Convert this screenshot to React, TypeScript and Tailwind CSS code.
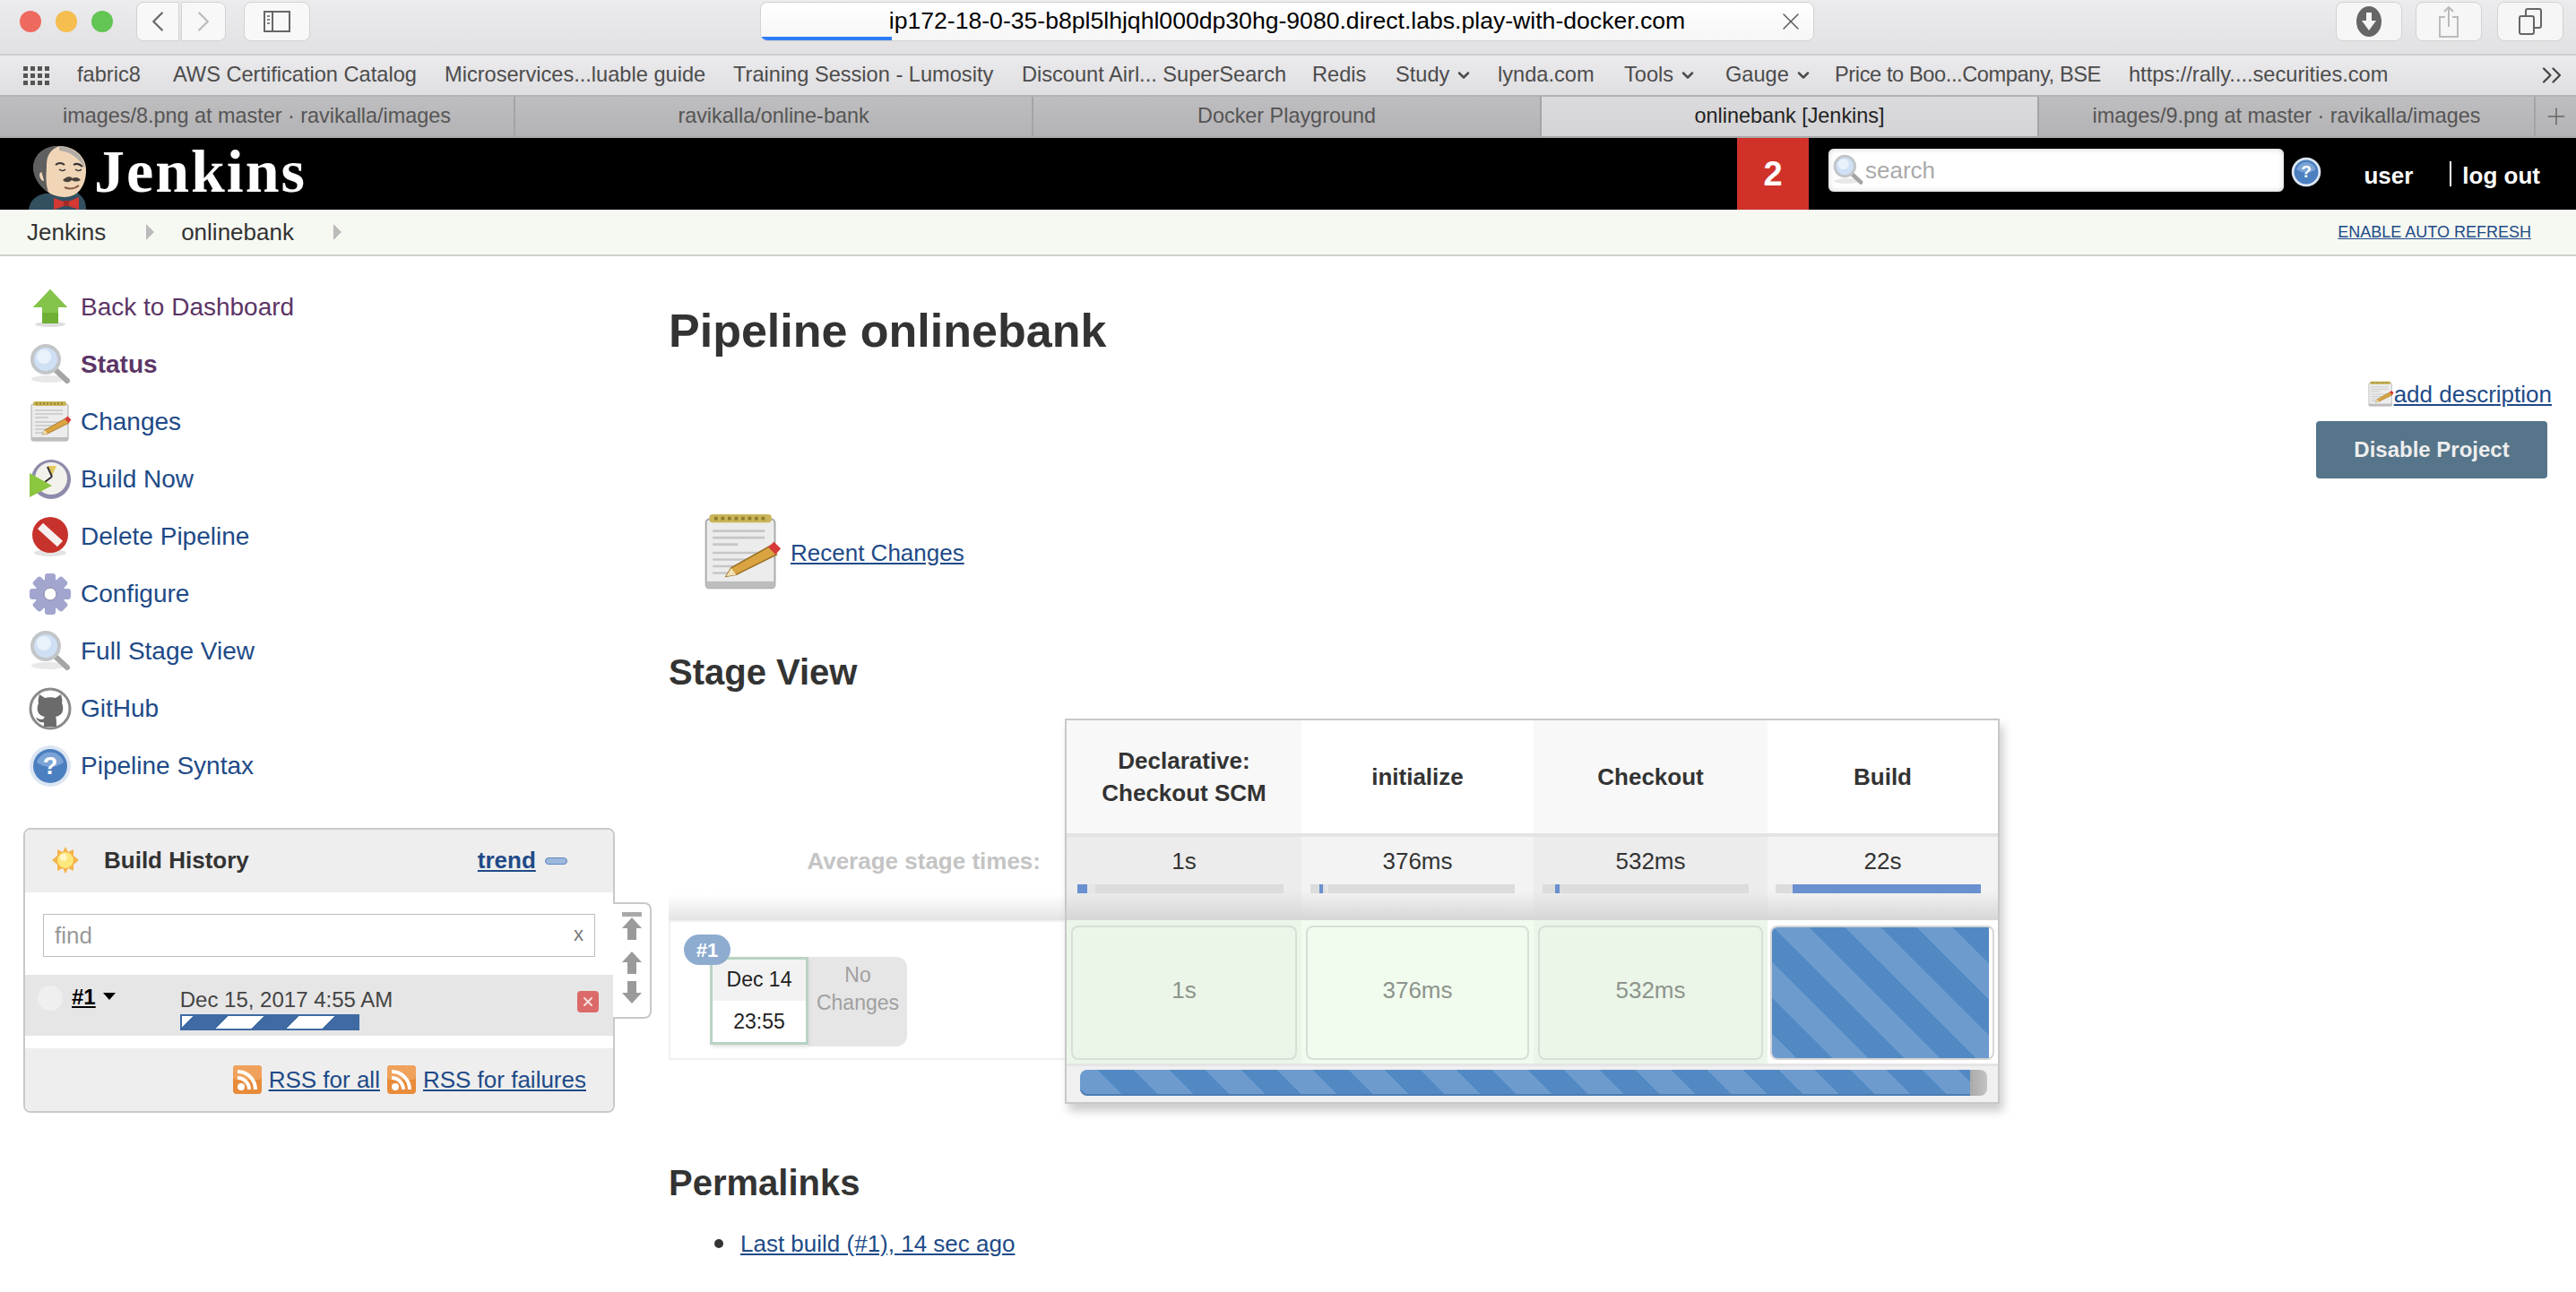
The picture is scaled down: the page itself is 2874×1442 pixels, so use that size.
import React from 'react';
import { ChevronDown, ChevronLeft, ChevronRight, ChevronsRight, Plus, X } from 'lucide-react';

const bookmarks = [
  { name: 'fabric8', w: 'w-[107px]' },
  { name: 'AWS Certification Catalog', w: 'w-[303px]' },
  { name: 'Microservices...luable guide', w: 'w-[322px]' },
  { name: 'Training Session - Lumosity', w: 'w-[322px]' },
  { name: 'Discount Airl... SuperSearch', w: 'w-[324px]' },
  { name: 'Redis', w: 'w-[93px]' },
  { name: 'Study', w: 'w-[114px]', menu: true },
  { name: 'lynda.com', w: 'w-[141px]' },
  { name: 'Tools', w: 'w-[113px]', menu: true },
  { name: 'Gauge', w: 'w-[122px]', menu: true },
  { name: 'Price to Boo...Company, BSE', w: 'w-[328px] tracking-[-0.4px]' },
  { name: 'https://rally....securities.com', w: 'w-[458px]' },
];

const tabs = [
  { name: 'images/8.png at master · ravikalla/images', w: 'w-[575px]' },
  { name: 'ravikalla/online-bank', w: 'w-[578px]' },
  { name: 'Docker Playground', w: 'w-[567px]' },
  { name: 'onlinebank [Jenkins]', w: 'w-[555px]', active: true },
  { name: 'images/9.png at master · ravikalla/images', w: 'w-[554px]' },
];

const stages = [
  {
    name: ['Declarative:', 'Checkout SCM'],
    time: '1s',
    head: 'bg-[#f8f8f8]',
    avg: 'from-[#ececec]',
    body: 'bg-[#ebf6e8] px-[5px]',
    cell: 'bg-[#ebf6e8]',
    bar: 'ml-[12px] w-[230px]',
    fill: 'ml-0 w-[11px] shadow-[9px_0_0_#e6e6e6]',
  },
  {
    name: ['initialize'],
    time: '376ms',
    head: 'bg-white',
    avg: 'from-[#f3f3f3]',
    body: 'bg-[#f1fcee] px-[5px]',
    cell: 'bg-[#f1fcee]',
    bar: 'ml-[10px] w-[228px]',
    fill: 'ml-[10px] w-[4px] shadow-[6px_0_0_#e6e6e6]',
  },
  {
    name: ['Checkout'],
    time: '532ms',
    head: 'bg-[#f8f8f8]',
    avg: 'from-[#ececec]',
    body: 'bg-[#ebf6e8] px-[5px]',
    cell: 'bg-[#ebf6e8]',
    bar: 'ml-[10px] w-[230px]',
    fill: 'ml-[14px] w-[5px]',
  },
  {
    name: ['Build'],
    time: '22s',
    head: 'bg-white',
    avg: 'from-[#f3f3f3]',
    body: 'bg-white pl-[3px] pr-[4px]',
    cell: '',
    bar: 'ml-[9px] w-[229px]',
    fill: 'ml-[19px] w-[210px]',
    running: true,
  },
];

const ArrowIcon = () => (
  <svg width="48" height="48" viewBox="0 0 48 48">
    <ellipse cx="24" cy="43" rx="17" ry="3" fill="#ddd" />
    <path d="M24 4 L43 24 H33 V42 H15 V24 H5 Z" fill="#6fb034" />
    <path d="M24 4 L43 24 H33 V30 H15 V24 H5 Z" fill="#84c44a" />
  </svg>
);

const SearchIcon = ({ size = 48 }: { size?: number }) => (
  <svg width={size} height={size} viewBox="0 0 48 48">
    <ellipse cx="22" cy="40" rx="19" ry="4" fill="#e8e8e8" />
    <path d="M29 29 L43 42" stroke="#a5a5a5" strokeWidth="6" strokeLinecap="round" />
    <circle cx="19" cy="18" r="15" fill="#cfe0f5" stroke="#c3c6c9" strokeWidth="4" />
    <circle cx="17" cy="15" r="8" fill="#e9f1fb" />
  </svg>
);

const NotepadIcon = ({ size = 48 }: { size?: number }) => (
  <svg width={size} height={size} viewBox="0 0 48 48">
    <rect x="3" y="4" width="41" height="41" rx="2" fill="#ececec" stroke="#a8a8a8" strokeWidth="1" />
    <rect x="3" y="41" width="41" height="4" fill="#bdbdbd" />
    <rect x="5" y="1" width="37" height="5" rx="2" fill="#c9b458" />
    <path d="M8 3.5 H39" stroke="#8f7d2c" strokeWidth="2" strokeDasharray="2 2" />
    <path d="M7 11 H38 M7 15 H38 M7 19 H22 M7 24 H38 M7 28 H30 M7 32 H26 M7 36 H22" stroke="#c6c6c6" strokeWidth="1.4" />
    <path d="M15 38 L18 33 L41 20 L45 25 L21 37 Z" fill="#d9a441" stroke="#9a6f22" strokeWidth="0.8" />
    <path d="M15 38 L18 33 L21 37 Z" fill="#f2e0b5" />
    <path d="M40 20.5 L43.5 17.5 L47.5 21.5 L44.5 25 Z" fill="#d83a3a" />
  </svg>
);

const BuildNowIcon = () => (
  <svg width="48" height="48" viewBox="0 0 48 48">
    <circle cx="25" cy="24" r="22" fill="#8d8bab" />
    <circle cx="25" cy="23" r="18" fill="#f3f1ec" />
    <path d="M21 9 H31 L26 20 Z" fill="#e2c75f" />
    <path d="M26 21 L21 10 M26 21 L18 27" stroke="#333" strokeWidth="2" />
    <path d="M1 17 L26 31 L1 44 Z" fill="#8bc63f" />
  </svg>
);

const DeleteIcon = () => (
  <svg width="48" height="48" viewBox="0 0 48 48">
    <ellipse cx="24" cy="42" rx="18" ry="4" fill="#e3e3e3" />
    <circle cx="24" cy="22" r="20" fill="#c8322c" />
    <path d="M13 12 L35 32" stroke="#f7eeee" strokeWidth="9" />
  </svg>
);

const GearIcon = () => (
  <svg width="48" height="48" viewBox="0 0 48 48">
    <g fill="#a2a6cf">
      <rect x="18" y="1" width="12" height="46" rx="3" />
      <rect x="18" y="1" width="12" height="46" rx="3" transform="rotate(45 24 24)" />
      <rect x="18" y="1" width="12" height="46" rx="3" transform="rotate(90 24 24)" />
      <rect x="18" y="1" width="12" height="46" rx="3" transform="rotate(135 24 24)" />
      <circle cx="24" cy="24" r="17" />
    </g>
    <circle cx="24" cy="24" r="7" fill="#fff" stroke="#83869f" strokeWidth="1" />
  </svg>
);

const GithubIcon = () => (
  <svg width="48" height="48" viewBox="0 0 48 48">
    <circle cx="24" cy="24" r="22" fill="#fff" stroke="#8a8a8a" strokeWidth="3" />
    <path
      d="M12 8 L18 12 C21 11 27 11 30 12 L36 8 C37 12 38 15 37 18 C40 24 38 32 30 33 C31 35 31 37 31 44 H17 V39 C13 40 10 38 8 34 C11 35 14 37 17 35 C17 34 17 34 18 33 C10 32 8 24 11 18 C10 15 11 12 12 8 Z"
      fill="#6b6b6b"
    />
  </svg>
);

const HelpIcon = ({ size = 48 }: { size?: number }) => (
  <svg width={size} height={size} viewBox="0 0 48 48">
    <circle cx="24" cy="24" r="23" fill="#dce6f3" />
    <circle cx="24" cy="24" r="19" fill="#4b7fbf" />
    <path d="M9 20 A15.5 15.5 0 0 1 39 20 Q24 30 9 20 Z" fill="#7ba3d6" />
    <text x="24" y="33" textAnchor="middle" fontSize="27" fontWeight="700" fill="#fff" fontFamily="Liberation Sans, sans-serif">?</text>
  </svg>
);

const RssIcon = () => (
  <svg width="32" height="32" viewBox="0 0 32 32">
    <rect width="32" height="32" rx="4" fill="#e88b3a" />
    <rect width="32" height="16" rx="4" fill="#f0a25c" />
    <circle cx="9" cy="24" r="4" fill="#fff" />
    <path d="M5 14 A13 13 0 0 1 18 27 M5 7 A20 20 0 0 1 25 27" fill="none" stroke="#fff" strokeWidth="4" />
  </svg>
);

const SunIcon = () => (
  <svg width="30" height="30" viewBox="0 0 30 30">
    <path
      d="M15 0 L18 6 L24 3 L24 10 L30 15 L24 20 L24 27 L18 24 L15 30 L12 24 L6 27 L6 20 L0 15 L6 10 L6 3 L12 6 Z"
      fill="#f5b24a"
    />
    <circle cx="15" cy="15" r="9" fill="#fbe77b" />
    <circle cx="13" cy="12" r="4" fill="#fff6c4" />
  </svg>
);

const JenkinsLogo = () => (
  <svg width="72" height="72" viewBox="0 0 72 72" className="block">
    <path d="M2 72 C3 62 10 56 20 54 L54 52 C62 56 66 62 66 72 Z" fill="#335061" />
    <path d="M8 26 C7 10 20 1 36 1 C52 1 66 12 66 28 C66 44 58 58 42 58 C24 58 10 44 8 26 Z" fill="#f0d6b7" />
    <path d="M8 32 C3 14 18 0 36 1 C26 5 22 12 22 22 C22 30 20 42 24 52 C16 48 10 40 8 32 Z" fill="#5f5f5f" />
    <path d="M36 1 C50 2 63 10 65 26 C58 14 48 7 36 6 Z" fill="#b0aca6" />
    <path d="M17 30 C12 28 12 40 20 41 Z" fill="#f0d6b7" stroke="#555" strokeWidth="1" />
    <path d="M32 22 Q37 18 42 22 M52 22 Q57 19 62 24" stroke="#333" strokeWidth="2" fill="none" />
    <path d="M36 27 Q40 30 43 27 M54 27 Q58 30 61 27" stroke="#333" strokeWidth="1.5" fill="none" />
    <path d="M40 39 C44 35 48 34 51 37 C54 35 58 36 60 39 C56 41 53 41 50 39 C47 42 43 42 40 39 Z" fill="#49433c" />
    <path d="M42 47 Q50 51 58 45" stroke="#8a5a44" strokeWidth="2" fill="none" />
    <path d="M30 59 L44 64 L58 58 L58 72 L44 67 L30 72 Z" fill="#d33833" />
    <rect x="41" y="62" width="6" height="6" rx="1" fill="#a32a26" />
  </svg>
);

const Arrow = ({ dir, bar }: { dir: 'up' | 'down'; bar?: boolean }) => (
  <svg width="24" height="32" viewBox="0 0 24 32" className={dir === 'down' ? 'rotate-180' : ''}>
    {bar && <rect x="1" y="0" width="22" height="5" fill="#a9a9a9" />}
    <path d="M12 6 L23 18 H17 V31 H7 V18 H1 Z" fill="#9a9a9a" />
  </svg>
);

const TitleBar = () => (
  <div className="flex h-[62px] items-start border-b-2 border-[#cfcecf] bg-linear-to-b from-[#ecebed] to-[#e1e0e2] pt-[2px]">
    <div className="ml-[22px] mt-[10px] flex w-[130px] gap-[16px]">
      <span className="h-[24px] w-[24px] rounded-full bg-[#ee6a5f]" />
      <span className="h-[24px] w-[24px] rounded-full bg-[#f6bd4f]" />
      <span className="h-[24px] w-[24px] rounded-full bg-[#62c554]" />
    </div>
    <button className="flex h-[44px] w-[48px] items-center justify-center rounded-l-lg border border-[#d2d2d2] bg-[#f8f8f8] text-[#6a6a6a]">
      <ChevronLeft size={38} strokeWidth={1.5} />
    </button>
    <button className="ml-[2px] flex h-[44px] w-[50px] items-center justify-center rounded-r-lg border border-[#d2d2d2] bg-[#f8f8f8] text-[#bcbcbc]">
      <ChevronRight size={38} strokeWidth={1.5} />
    </button>
    <button className="ml-[20px] flex h-[44px] w-[74px] items-center justify-center rounded-lg border border-[#d2d2d2] bg-[#f8f8f8]">
      <svg width="30" height="24" viewBox="0 0 30 24">
        <rect x="1" y="1" width="28" height="22" fill="none" stroke="#666" strokeWidth="2" />
        <path d="M10 1 V23" stroke="#666" strokeWidth="2" />
        <path d="M4 6 H7 M4 10 H7 M4 14 H7" stroke="#888" strokeWidth="2" />
      </svg>
    </button>
    <div className="relative ml-[502px] flex h-[44px] w-[1176px] items-center justify-center overflow-hidden rounded-lg border border-[#d2d2d2] bg-linear-to-b from-white to-[#f6f6f6] text-[26.6px] text-black">
      ip172-18-0-35-b8pl5lhjqhl000dp30hg-9080.direct.labs.play-with-docker.com
      <span className="absolute bottom-0 left-0 h-[4px] w-[146px] bg-[#2f7df6]" />
      <X size={32} strokeWidth={1} className="absolute right-[9px] top-[5px] text-[#555]" />
    </div>
    <button className="ml-[582px] flex h-[44px] w-[74px] items-center justify-center rounded-lg border border-[#d2d2d2] bg-[#f6f6f6]">
      <svg width="28" height="34" viewBox="0 0 28 34">
        <ellipse cx="14" cy="17" rx="14" ry="17" fill="#666" />
        <path d="M11 7 H17 V16 H22 L14 27 L6 16 H11 Z" fill="#f6f6f6" />
      </svg>
    </button>
    <button className="ml-[15px] flex h-[44px] w-[74px] items-center justify-center rounded-lg border border-[#d2d2d2] bg-[#f6f6f6]">
      <svg width="24" height="36" viewBox="0 0 24 36" fill="none" stroke="#bbb" strokeWidth="2">
        <path d="M8 13 H2 V35 H22 V13 H16 M12 24 V2 M7 7 L12 2 L17 7" />
      </svg>
    </button>
    <button className="ml-[17px] flex h-[44px] w-[74px] items-center justify-center rounded-lg border border-[#d2d2d2] bg-[#f6f6f6]">
      <svg width="26" height="30" viewBox="0 0 26 30" fill="none" stroke="#666" strokeWidth="2">
        <rect x="1" y="9" width="16" height="20" rx="2" />
        <path d="M8 9 V3 Q8 1 10 1 H23 Q25 1 25 3 V20 Q25 22 23 22 H17" />
      </svg>
    </button>
  </div>
);

const BookmarksBar = () => (
  <div className="flex h-[46px] items-center border-b-2 border-[#b3b2b4] bg-linear-to-b from-[#ebeaec] to-[#dfdee0] text-[23.6px] text-[#4c4c4c]">
    <div className="ml-[26px] mr-[31px] grid w-[29px] grid-cols-4 gap-[3px]">
      {Array.from({ length: 12 }).map((_, i) => (
        <span key={i} className="h-[5px] w-[5px] bg-[#555]" />
      ))}
    </div>
    {bookmarks.map((b) => (
      <span key={b.name} className={`flex shrink-0 items-center gap-[6px] whitespace-nowrap ${b.w}`}>
        {b.name}
        {b.menu && <ChevronDown size={20} strokeWidth={3} />}
      </span>
    ))}
    <ChevronsRight size={36} strokeWidth={1.5} className="ml-[-4px] text-[#444]" />
  </div>
);

const TabsBar = () => (
  <div className="flex h-[46px] border-b-2 border-[#a9a8aa] text-[23.4px]">
    {tabs.map((t) => (
      <div
        key={t.name}
        className={`flex shrink-0 items-center justify-center border-r-2 border-[#a4a3a5] ${t.w} ${
          t.active ? 'bg-linear-to-b from-[#dbdadc] to-[#d4d3d5] text-[#222]' : 'bg-linear-to-b from-[#bebdbf] to-[#b3b2b4] text-[#555]'
        }`}
      >
        {t.name}
      </div>
    ))}
    <div className="flex flex-1 items-center justify-center bg-linear-to-b from-[#bebdbf] to-[#b3b2b4] text-[#666]">
      <Plus size={30} strokeWidth={1.2} />
    </div>
  </div>
);

const JenkinsHeader = () => (
  <div className="flex h-[80px] items-stretch bg-black">
    <div className="ml-[30px] mt-[8px] w-[72px]">
      <JenkinsLogo />
    </div>
    <div className="ml-[3px] mt-[-3px] flex-1 font-['Liberation_Serif',serif] text-[68px] font-bold leading-[80px] tracking-[2px] text-white">Jenkins</div>
    <div className="flex w-[936px] shrink-0 whitespace-nowrap">
      <div className="flex w-[80px] items-center justify-center bg-[#d0322a] text-[38px] font-bold text-white">2</div>
      <div className="ml-[22px] mt-[12px] flex h-[48px] w-[508px] items-center rounded-md bg-white pl-[4px] text-[26px] text-[#aaa] shadow-[inset_0_0_6px_#ccc]">
        <SearchIcon size={36} />
        <span className="ml-[1px]">search</span>
      </div>
      <div className="ml-[8px] mt-[21px]">
        <HelpIcon size={34} />
      </div>
      <div className="ml-auto mt-[27px] text-[26px] font-bold leading-[30px] text-white">user</div>
      <div className="ml-[41px] mt-[26px] h-[28px] w-[2px] bg-white" />
      <div className="ml-[12px] mt-[27px] pr-[40px] text-[26px] font-bold leading-[30px] text-white">log out</div>
    </div>
  </div>
);

const Breadcrumb = () => (
  <div className="flex h-[52px] items-center border-b-2 border-[#cdd1c8] bg-[#f6f8f2] pl-[30px] text-[26px] text-[#333]">
    <span>Jenkins</span>
    <span className="ml-[45px] mr-[30px] h-0 w-0 border-y-[9px] border-l-[9px] border-y-transparent border-l-[#bbb]" />
    <span>onlinebank</span>
    <span className="ml-[44px] h-0 w-0 border-y-[9px] border-l-[9px] border-y-transparent border-l-[#bbb]" />
    <a className="ml-auto mr-[50px] text-[18px] text-[#204a87] underline">ENABLE AUTO REFRESH</a>
  </div>
);

const navItems = [
  { label: 'Back to Dashboard', icon: <ArrowIcon />, cls: 'text-[#5c3566]' },
  { label: 'Status', icon: <SearchIcon />, cls: 'text-[#5c3566] font-bold' },
  { label: 'Changes', icon: <NotepadIcon />, cls: 'text-[#204a87]' },
  { label: 'Build Now', icon: <BuildNowIcon />, cls: 'text-[#204a87]' },
  { label: 'Delete Pipeline', icon: <DeleteIcon />, cls: 'text-[#204a87]' },
  { label: 'Configure', icon: <GearIcon />, cls: 'text-[#204a87]' },
  { label: 'Full Stage View', icon: <SearchIcon />, cls: 'text-[#204a87]' },
  { label: 'GitHub', icon: <GithubIcon />, cls: 'text-[#204a87]' },
  { label: 'Pipeline Syntax', icon: <HelpIcon />, cls: 'text-[#204a87]' },
];

const BuildHistory = () => (
  <div className="relative ml-[26px] mt-[37px] w-[660px] rounded-lg border-2 border-[#c9c9c9] bg-white">
    <div className="flex h-[70px] items-center rounded-t-lg bg-[#eeeeee] pb-[2px] pl-[30px] text-[26px]">
      <SunIcon />
      <span className="ml-[28px] font-bold text-[#333]">Build History</span>
      <a className="ml-[255px] font-bold text-[#204a87] underline">trend</a>
      <span className="ml-[10px] mt-[2px] h-[8px] w-[25px] rounded-sm border border-[#5f86c0] bg-[#9db8dd]" />
    </div>
    <div className="pb-[14px] pt-[24px]">
      <div className="mx-[20px] flex h-[48px] items-center justify-between border border-[#bdbdbd] pl-[12px] pr-[12px] text-[26px] text-[#999]">
        <span>find</span>
        <span className="mt-[-4px] text-[22px] text-[#777]">x</span>
      </div>
      <div className="mt-[20px] flex h-[68px] items-start bg-[#e6e6e6] pl-[14px] pr-[16px] pt-[12px]">
        <span className="h-[28px] w-[28px] rounded-full bg-[#efefef]" />
        <a className="ml-[10px] text-[24px] font-bold leading-[26px] text-black underline">#1</a>
        <span className="ml-[8px] mt-[8px] h-0 w-0 border-x-[7px] border-t-[8px] border-x-transparent border-t-black" />
        <div className="ml-[72px] flex-1">
          <div className="pt-[1px] text-[24px] leading-[30px] text-[#444]">Dec 15, 2017 4:55 AM</div>
          <div className="mt-[1px] h-[18px] w-[200px] border-2 border-[#3f6aa3] bg-[repeating-linear-gradient(-45deg,#3f6aa3_0px,#3f6aa3_28px,#ffffff_28px,#ffffff_56px)]" />
        </div>
        <span className="mt-[6px] flex h-[24px] w-[24px] items-center justify-center rounded-sm bg-[#dc6a6a] text-[#f6dede]">
          <X size={16} strokeWidth={3} />
        </span>
      </div>
    </div>
    <div className="flex h-[70px] items-center justify-end rounded-b-lg bg-[#eeeeee] pr-[30px] text-[26px] text-[#204a87]">
      <RssIcon />
      <a className="ml-[8px] underline">RSS for all</a>
      <span className="ml-[8px]" />
      <RssIcon />
      <a className="ml-[8px] underline">RSS for failures</a>
    </div>
    <div className="absolute left-full top-[81px] flex h-[130px] w-[43px] flex-col items-center justify-center gap-[6px] rounded-r-lg border-2 border-l-0 border-[#c9c9c9] bg-white">
      <Arrow dir="up" bar />
      <Arrow dir="up" />
      <Arrow dir="down" />
    </div>
  </div>
);

const Sidebar = () => (
  <div className="w-[746px] shrink-0 pt-[25px]">
    {navItems.map((n) => (
      <div key={n.label} className="flex h-16 items-center gap-[10px] pl-[32px] text-[28px]">
        {n.icon}
        <a className={n.cls}>{n.label}</a>
      </div>
    ))}
    <BuildHistory />
  </div>
);

const StageView = () => (
  <div className="mt-[28px] flex">
    <div className="w-[442px] shrink-0">
      <div className="h-[128px]" />
      <div className="h-[97px] bg-linear-to-b from-white from-70% to-[#e4e4e4] pr-[27px] pt-[13px] text-right text-[26px] font-bold leading-[36px] text-[#c4c4c4]">
        Average stage times:
      </div>
      <div className="flex h-[156px] gap-0 border-y-2 border-l-2 border-[#f0f0f0] pl-[44px] pt-[39px]">
        <div className="relative h-[98px] w-[110px] border-[3px] border-[#b9d3c4] bg-white text-center text-[23px] text-[#222] shadow-[2px_2px_4px_#ddd]">
          <div className="h-[46px] bg-[#f2f2f2] leading-[44px]">Dec 14</div>
          <div className="leading-[47px]">23:55</div>
          <span className="absolute left-[-32px] top-[-28px] flex h-[34px] w-[52px] items-center justify-center rounded-full bg-[#8eacd0] text-[22px] font-bold text-white">
            #1
          </span>
        </div>
        <div className="h-[100px] w-[110px] rounded-r-xl bg-[#e6e6e6] px-[4px] pt-[5px] text-center text-[23px] leading-[31px] text-[#a0a0a0]">
          No Changes
        </div>
      </div>
    </div>
    <div className="h-[430px] w-[1043px] shrink-0 border-2 border-[#c8c8c8] bg-white shadow-[4px_8px_10px_#ccc]">
      <div className="grid grid-cols-[262px_259px_261px_257px]">
        {stages.map((s) => (
          <div key={s.time} className="flex flex-col">
            <div className={`flex h-[126px] flex-col items-center justify-center text-[26px] font-bold leading-[36px] text-[#333] ${s.head}`}>
              {s.name.map((line) => (
                <span key={line}>{line}</span>
              ))}
            </div>
            <div className={`h-[97px] border-t-4 border-[#e3e3e3] bg-linear-to-b from-65% to-[#d6d6d6] text-center ${s.avg}`}>
              <div className="pt-[9px] text-[26px] leading-[36px] text-[#333]">{s.time}</div>
              <div className={`mt-[8px] h-[10px] bg-[#dcdcdc] ${s.bar}`}>
                <div className={`h-[10px] bg-[#6a90d0] ${s.fill}`} />
              </div>
            </div>
            <div className={`h-[160px] pb-[4px] pt-[6px] ${s.body}`}>
              {s.running ? (
                <div className="h-[150px] rounded-lg border-2 border-[#d5d5d5]">
                  <div className="h-[146px] w-[242px] rounded-l-md bg-[repeating-linear-gradient(45deg,#6d9bce_0px,#6d9bce_19.1px,#5289c3_19.1px,#5289c3_47.4px,#6d9bce_47.4px,#6d9bce_56.57px)]" />
                </div>
              ) : (
                <div className={`flex h-[150px] items-center justify-center rounded-lg border-2 border-[#d8dfd6] pb-[5px] text-[26px] text-[#8d948d] ${s.cell}`}>
                  {s.time}
                </div>
              )}
            </div>
          </div>
        ))}
      </div>
      <div className="h-[43px] border-t-[3px] border-[#e5e5e5] bg-[#f0f0f0] pl-[15px] pt-[4px]">
        <div className="flex h-[29px] w-[1012px]">
          <div className="flex-1 rounded-l-lg border-b-2 border-[#4a7cb3] bg-[repeating-linear-gradient(45deg,#5289c3_0px,#5289c3_4.3px,#6d9bce_4.3px,#6d9bce_33px,#5289c3_33px,#5289c3_56.57px)]" />
          <div className="w-[19px] rounded-r-lg bg-linear-to-r from-[#a9a9a9] to-[#c4c4c4]" />
        </div>
      </div>
    </div>
  </div>
);

const Main = () => (
  <div className="min-w-0 flex-1 text-[#333]">
    <h1 className="mt-[53px] text-[52px] font-bold leading-[60px]">Pipeline onlinebank</h1>
    <div className="mt-[23px] flex h-[36px] items-center justify-end pr-[27px] text-[26px] text-[#204a87]">
      <NotepadIcon size={30} />
      <a className="underline">add description</a>
    </div>
    <div className="mt-[12px] flex justify-end pr-[32px]">
      <button className="h-[64px] w-[258px] rounded-sm bg-[#56758a] text-[24px] font-bold text-[#eeeeee]">Disable Project</button>
    </div>
    <div className="ml-[36px] mt-[38px] flex h-[90px] items-center gap-[10px] text-[26px] text-[#204a87]">
      <NotepadIcon size={90} />
      <a className="underline">Recent Changes</a>
    </div>
    <h2 className="mt-[64px] text-[40px] font-bold leading-[48px]">Stage View</h2>
    <StageView />
    <h2 className="mt-[64px] text-[40px] font-bold leading-[48px]">Permalinks</h2>
    <ul className="ml-[51px] mt-[26px] text-[26px] leading-[36px]">
      <li className="flex items-center gap-[19px]">
        <span className="h-[10px] w-[10px] rounded-full bg-[#333]" />
        <a className="text-[#204a87] underline">Last build (#1), 14 sec ago</a>
      </li>
    </ul>
  </div>
);

export default function App() {
  return (
    <div className="flex h-[1442px] w-[2874px] flex-col overflow-hidden bg-white font-['Liberation_Sans',sans-serif]">
      <TitleBar />
      <BookmarksBar />
      <TabsBar />
      <JenkinsHeader />
      <Breadcrumb />
      <div className="flex min-h-0 flex-1">
        <Sidebar />
        <Main />
      </div>
    </div>
  );
}
